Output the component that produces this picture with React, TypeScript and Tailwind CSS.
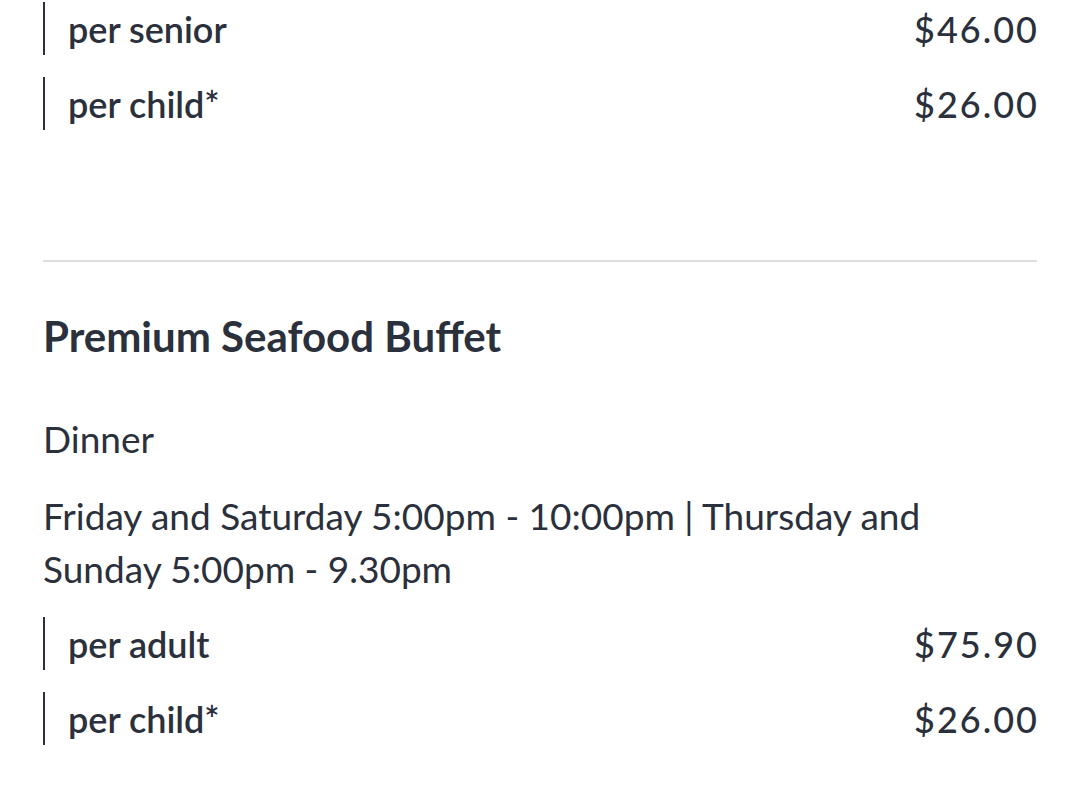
import React from "react";

type Price = { label: string; price: string };

const topPrices: Price[] = [
  { label: "per senior", price: "$46.00" },
  { label: "per child*", price: "$26.00" },
];

const seafoodPrices: Price[] = [
  { label: "per adult", price: "$75.90" },
  { label: "per child*", price: "$26.00" },
];

function PriceRow({ label, price }: Price) {
  return (
    <div className="flex h-[53px] items-center justify-between border-l-2 border-[#2a303c] pl-[23px]">
      <span className="text-[36px] font-semibold leading-none">{label}</span>
      <span className="-mr-[2px] text-[36px] font-medium leading-none tracking-[2px]">{price}</span>
    </div>
  );
}

export default function App() {
  return (
    <div
      className="min-h-[808px] bg-white px-[43px] pt-[2px] text-[#2a303c]"
      style={{ fontFamily: "Lato, 'Noto Sans', sans-serif" }}
    >
      <div className="flex flex-col gap-[22px]">
        {topPrices.map((p) => (
          <PriceRow key={p.label} {...p} />
        ))}
      </div>

      <div className="mt-[130px] h-[2px] bg-[#dedede]" />

      <h2 className="mt-[50px] text-[42px] font-bold leading-[48px]">Premium Seafood Buffet</h2>

      <p className="mt-[55px] text-[37px] leading-[48px]">Dinner</p>

      <p className="mt-[26px] max-w-[930px] text-[37px] leading-[53px]">
        Friday and Saturday 5:00pm - 10:00pm | Thursday and Sunday 5:00pm - 9.30pm
      </p>

      <div className="mt-[22px] flex flex-col gap-[22px]">
        {seafoodPrices.map((p) => (
          <PriceRow key={p.label} {...p} />
        ))}
      </div>
    </div>
  );
}
